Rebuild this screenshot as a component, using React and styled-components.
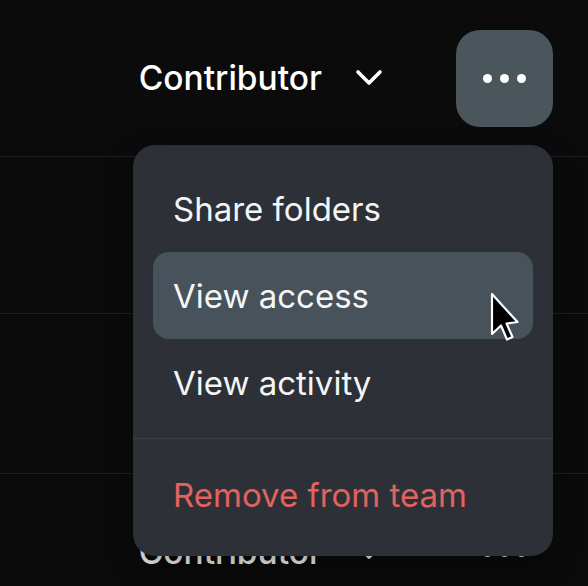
import React from 'react';
import styled, { createGlobalStyle } from 'styled-components';

//#region STYLES
const GlobalStyle = createGlobalStyle`
    html, body {
        margin: 0;
        padding: 0;
        background: #0b0b0c;
        overflow: hidden;
    }
    body {
        font-family: Inter, "Noto Sans", sans-serif;
        color: #fff;
    }
`;

const StyledPage = styled.div`
    width: 588px;
    height: 586px;
    overflow: hidden;
    position: relative;
`;

const StyledRow = styled.div`
    position: relative;
    height: ${props => props.height || 156}px;
    border-bottom: 1px solid #1d2023;
    display: flex;
    align-items: center;
    justify-content: flex-end;
    padding-right: 35px;
`;

const StyledRole = styled.button`
    display: flex;
    align-items: center;
    gap: 33px;
    background: none;
    border: none;
    padding: 0;
    margin-right: 73px;
    color: #fff;
    font-family: inherit;
    font-size: 33.5px;
    font-weight: 500;
    letter-spacing: 0;
`;

const StyledMoreButton = styled.button`
    width: 97px;
    height: 97px;
    border-radius: 24px;
    border: none;
    background-color: ${props => props.isActive ? '#4b555c' : 'transparent'};
    display: flex;
    align-items: center;
    justify-content: center;
    gap: 8px;
    padding: 0;

    & span {
        width: 9px;
        height: 9px;
        border-radius: 50%;
        background: #fff;
    }
`;

const StyledMenu = styled.div`
    position: absolute;
    top: 145px;
    right: 35px;
    width: 420px;
    background-color: #2d3137;
    border-radius: 22px;
    z-index: 10;
    box-shadow: 0 10px 30px rgba(0, 0, 0, .4);
`;

const StyledMenuGroup = styled.ul`
    list-style: none;
    margin: 0;
    padding: ${props => props.padding};
    border-top: ${props => props.divided ? '1px solid #3c4148' : 'none'};
`;

const StyledMenuItem = styled.li`
    position: relative;
    height: 87px;
    display: flex;
    align-items: center;
    padding-left: 20px;
    border-radius: 16px;
    font-size: 33px;
    font-weight: 400;
    color: ${props => props.danger ? '#e2625e' : '#f4f5f6'};
    background-color: ${props => props.isHovered ? '#48525a' : 'transparent'};
`;

const StyledCursor = styled.svg`
    position: absolute;
    left: 337px;
    top: 40px;
`;
//#endregion

const Chevron = () => (
    <svg width="28" height="18" viewBox="0 0 28 18">
        <polyline points="3,3 14,14 25,3" fill="none" stroke="#fff" strokeWidth="3.6"
            strokeLinecap="round" strokeLinejoin="round" />
    </svg>
);

const Cursor = () => (
    <StyledCursor width="30" height="52" viewBox="0 0 30 52">
        <path d="M2 2 L2 42 L11 33.5 L17 47.5 L22.5 45 L16.5 31.5 L27.5 30 Z"
            fill="#000" stroke="#fff" strokeWidth="2.2" strokeLinejoin="round" />
    </StyledCursor>
);

const menuItems = [
    { label: 'Share folders' },
    { label: 'View access', hovered: true },
    { label: 'View activity' },
];

function MemberRow({ height, isOpen }) {
    return (
        <StyledRow height={height}>
            <StyledRole>
                <span>Contributor</span>
                <Chevron />
            </StyledRole>
            <StyledMoreButton isActive={isOpen}>
                <span /><span /><span />
            </StyledMoreButton>
            {isOpen && (
                <StyledMenu>
                    <StyledMenuGroup padding="20px 20px 12px">
                        {menuItems.map(item => (
                            <StyledMenuItem key={item.label} isHovered={item.hovered}>
                                {item.label}
                                {item.hovered && <Cursor />}
                            </StyledMenuItem>
                        ))}
                    </StyledMenuGroup>
                    <StyledMenuGroup divided padding="12px 20px 18px">
                        <StyledMenuItem danger>Remove from team</StyledMenuItem>
                    </StyledMenuGroup>
                </StyledMenu>
            )}
        </StyledRow>
    );
}

export default function App() {
    return (
        <StyledPage>
            <GlobalStyle />
            <MemberRow isOpen />
            <MemberRow />
            <MemberRow height={159} />
            <MemberRow />
        </StyledPage>
    );
}
